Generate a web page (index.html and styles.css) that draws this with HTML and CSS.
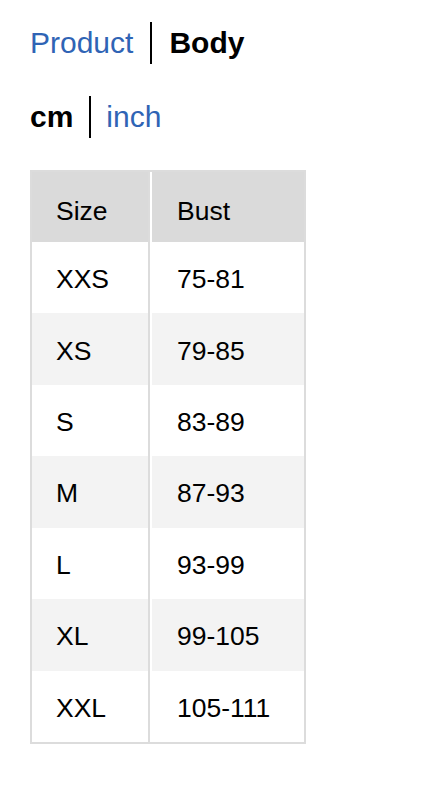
FILE: index.html
```html
<!DOCTYPE html>
<html>
<head>
<meta charset="utf-8">
<link rel="stylesheet" href="styles.css">
</head>
<body>
<div class="page">
  <div class="switch">
    <a class="opt link">Product</a>
    <span class="sep"></span>
    <span class="opt active">Body</span>
  </div>
  <div class="switch units">
    <span class="opt active">cm</span>
    <span class="sep"></span>
    <a class="opt link">inch</a>
  </div>
  <table class="sizes">
    <thead>
      <tr><th class="c1">Size</th><th class="c2">Bust</th></tr>
    </thead>
    <tbody>
      <tr><td class="c1">XXS</td><td class="c2">75-81</td></tr>
      <tr class="alt"><td class="c1">XS</td><td class="c2">79-85</td></tr>
      <tr><td class="c1">S</td><td class="c2">83-89</td></tr>
      <tr class="alt"><td class="c1">M</td><td class="c2">87-93</td></tr>
      <tr><td class="c1">L</td><td class="c2">93-99</td></tr>
      <tr class="alt"><td class="c1">XL</td><td class="c2">99-105</td></tr>
      <tr><td class="c1">XXL</td><td class="c2">105-111</td></tr>
    </tbody>
  </table>
</div>
</body>
</html>
```
FILE: styles.css
```css
html, body {
  margin: 0;
  padding: 0;
  background: #fff;
}
body {
  font-family: "Liberation Sans", Arial, Helvetica, sans-serif;
  color: #000;
}
.page {
  padding: 22px 0 0 30px;
}
.switch {
  display: flex;
  align-items: center;
  height: 42px;
  font-size: 30px;
  line-height: 42px;
}
.units {
  margin-top: 32px;
}
.opt.link {
  color: #2f64b5;
}
.opt.active {
  font-weight: bold;
}
.sep {
  width: 2px;
  height: 42px;
  background: #000;
  margin: 0 17px 0 17px;
}
.units .sep {
  margin: 0 15px 0 16px;
}
.sizes {
  margin-top: 32px;
  border-collapse: separate;
  border-spacing: 0;
  border: 2px solid #dcdcdc;
  width: 276px;
  font-size: 26.5px;
}
.sizes th,
.sizes td {
  text-align: left;
  font-weight: normal;
  padding: 3px 0 0 24px;
  height: 68.43px;
  vertical-align: middle;
  line-height: 30px;
}
.sizes th {
  background: #dadada;
  padding-top: 8px;
  height: 62px;
}
.sizes .c1 {
  width: 92px;
  border-right: 2px solid #dcdcdc;
}
.sizes .c2 {
  border-left: 2px solid #fff;
  padding-left: 25px;
}
.sizes tr.alt td {
  background: #f3f3f3;
}
```
